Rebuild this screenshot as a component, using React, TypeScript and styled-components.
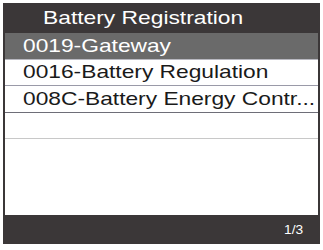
import React from 'react';
import styled, { createGlobalStyle } from 'styled-components';

const GlobalStyle = createGlobalStyle`
  html, body {
    margin: 0;
    padding: 0;
    background: #ffffff;
  }
  body {
    font-family: "Liberation Sans", Arial, sans-serif;
  }
`;

const Page = styled.div`
  width: 323px;
  height: 250px;
  padding: 3px 3px 0 3px;
  box-sizing: border-box;
  background: #ffffff;
`;

const Screen = styled.div`
  width: 317px;
  height: 241px;
  background: #3b3738;
  padding: 0 2px;
  box-sizing: border-box;
  display: flex;
  flex-direction: column;
`;

const Header = styled.div`
  height: 30px;
  display: flex;
  align-items: center;
  padding-left: 38px;
  color: #ffffff;
  font-size: 19px;
  white-space: nowrap;
`;

const Stretch = styled.span<{ $x?: number }>`
  display: inline-block;
  transform: scaleX(${(p) => p.$x ?? 1.2});
  transform-origin: left center;
  white-space: nowrap;
`;

const List = styled.div`
  flex: 1;
  background: #ffffff;
  display: flex;
  flex-direction: column;
`;

const Row = styled.div<{ $selected?: boolean; $line: string }>`
  height: 26.5px;
  box-sizing: border-box;
  display: flex;
  align-items: center;
  padding-left: 18px;
  font-size: 18.5px;
  color: ${(p) => (p.$selected ? '#ffffff' : '#1a1a1a')};
  background: ${(p) => (p.$selected ? '#6a6a6a' : '#ffffff')};
  border-bottom: 1px solid ${(p) => p.$line};
  overflow: hidden;
`;

const Footer = styled.div`
  height: 29px;
  display: flex;
  align-items: center;
  justify-content: flex-end;
  padding-right: 17px;
  color: #ffffff;
  font-size: 12.5px;
`;

const rows = [
  { label: '0019-Gateway', line: '#b8b8c0', selected: true },
  { label: '0016-Battery Regulation', line: '#9a9aa8' },
  { label: '008C-Battery Energy Contr...', line: '#6e6e78' },
  { label: '', line: '#c8c8c8' },
];

export default function App() {
  return (
    <>
      <GlobalStyle />
      <Page>
        <Screen>
          <Header>
            <Stretch>Battery Registration</Stretch>
          </Header>
          <List>
            {rows.map((r, i) => (
              <Row key={i} $selected={r.selected} $line={r.line}>
                <Stretch $x={1.23}>{r.label}</Stretch>
              </Row>
            ))}
          </List>
          <Footer>
            <Stretch $x={1.1}>1/3</Stretch>
          </Footer>
        </Screen>
      </Page>
    </>
  );
}
